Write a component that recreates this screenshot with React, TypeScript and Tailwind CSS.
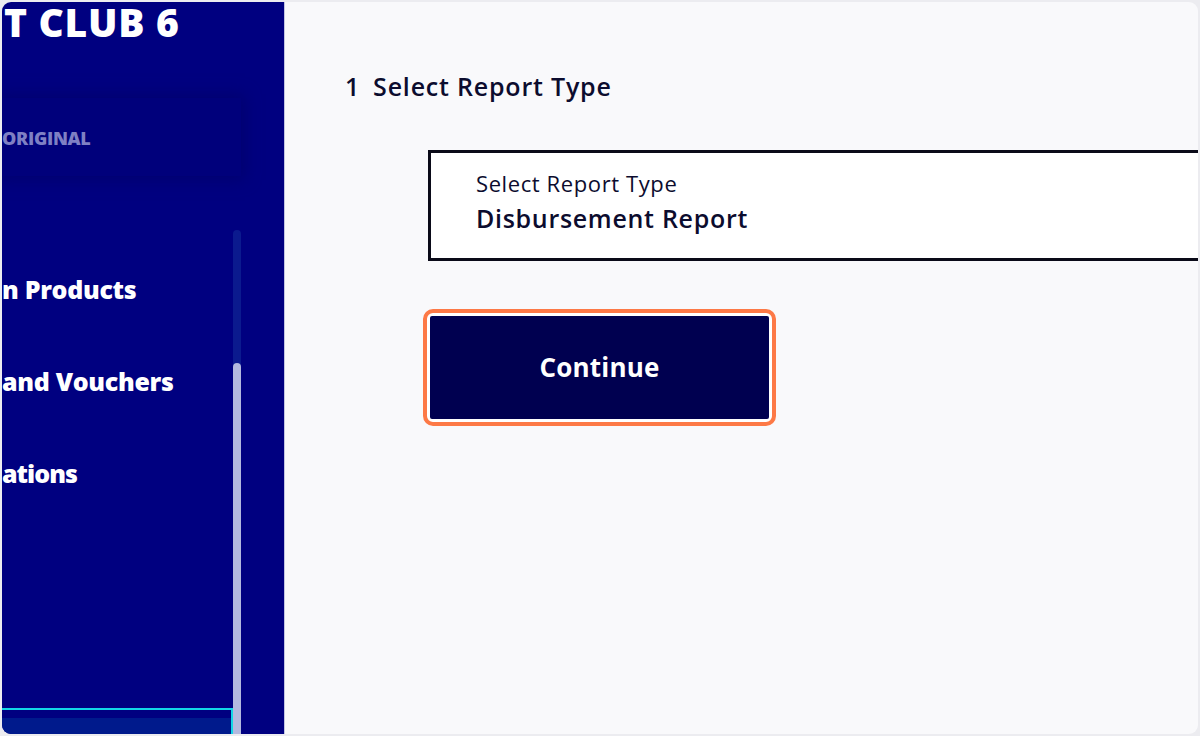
import React from "react";

export default function App() {
  const font = { fontFamily: "'Open Sans', Lato, sans-serif" };
  return (
    <div className="w-[1200px] h-[736px] bg-[#ececf0] p-[2px] overflow-hidden" style={font}>
      <div className="w-full h-full rounded-[9px] overflow-hidden flex bg-[#f9f9fb]">
        <aside className="w-[283px] shrink-0 h-full bg-[#000080] border-r border-[#c3c6e2] flex overflow-hidden">
          <div className="flex-1 flex flex-col min-w-0">
            <div className="h-[46px] pl-[2px] text-white font-extrabold text-[39px] leading-[40px] tracking-[0.7px] whitespace-nowrap">
              T CLUB 6
            </div>
            <div className="mt-[50px] h-[78px] mr-[-8px] bg-[#00007b] shadow-[0_0_14px_4px_rgba(0,0,110,0.9)] flex items-center pt-[3px]">
              <span className="text-[#7f80c4] font-extrabold text-[18px] tracking-[-0.3px]">ORIGINAL</span>
            </div>
            <div className="flex-1 flex flex-col pt-[100px] gap-[66px] text-white font-extrabold text-[25px] leading-[26px] tracking-[-0.3px] whitespace-nowrap">
              <span>n Products</span>
              <span>and Vouchers</span>
              <span className="tracking-[-1px]">ations</span>
            </div>
            <div className="h-[26px] border-t-2 border-r-2 border-[#12d6e6] flex flex-col">
              <div className="h-[8px] bg-[#000080]" />
              <div className="flex-1 bg-[#001a8c]" />
            </div>
          </div>
          <div className="w-[8px] shrink-0 flex flex-col pt-[228px]">
            <div className="flex-1 rounded-t-full bg-[#0b1a8e] flex flex-col">
              <div className="h-[133px]" />
              <div className="flex-1 rounded-t-full bg-[#b3b9df]" />
            </div>
          </div>
          <div className="w-[43px] shrink-0" />
        </aside>
        <main className="flex-1 min-w-0 overflow-hidden pl-[60px] pt-[68px]">
          <div className="flex items-center gap-[13px] text-[#0c0c2e] text-[25px] font-semibold leading-[32px] tracking-[0.8px]">
            <span>1</span>
            <span>Select Report Type</span>
          </div>
          <div className="ml-[83px] mt-[48px] w-[900px] h-[111px] bg-white border-[3px] border-[#0a0a18] pl-[45px] pt-[16px] text-[#0c0c2e]">
            <div className="text-[22px] leading-[28px] font-normal tracking-[0.6px]">Select Report Type</div>
            <div className="text-[25px] leading-[34px] font-semibold mt-[4px] tracking-[0.7px]">Disbursement Report</div>
          </div>
          <div className="ml-[78px] mt-[48px] w-[353px] h-[117px] rounded-[10px] border-[4px] border-[#fd7946] bg-white p-[3px]">
            <button className="w-full h-full bg-[#000050] rounded-[2px] text-white font-bold text-[26px] tracking-[0.2px] flex items-center justify-center">
              Continue
            </button>
          </div>
        </main>
      </div>
    </div>
  );
}
